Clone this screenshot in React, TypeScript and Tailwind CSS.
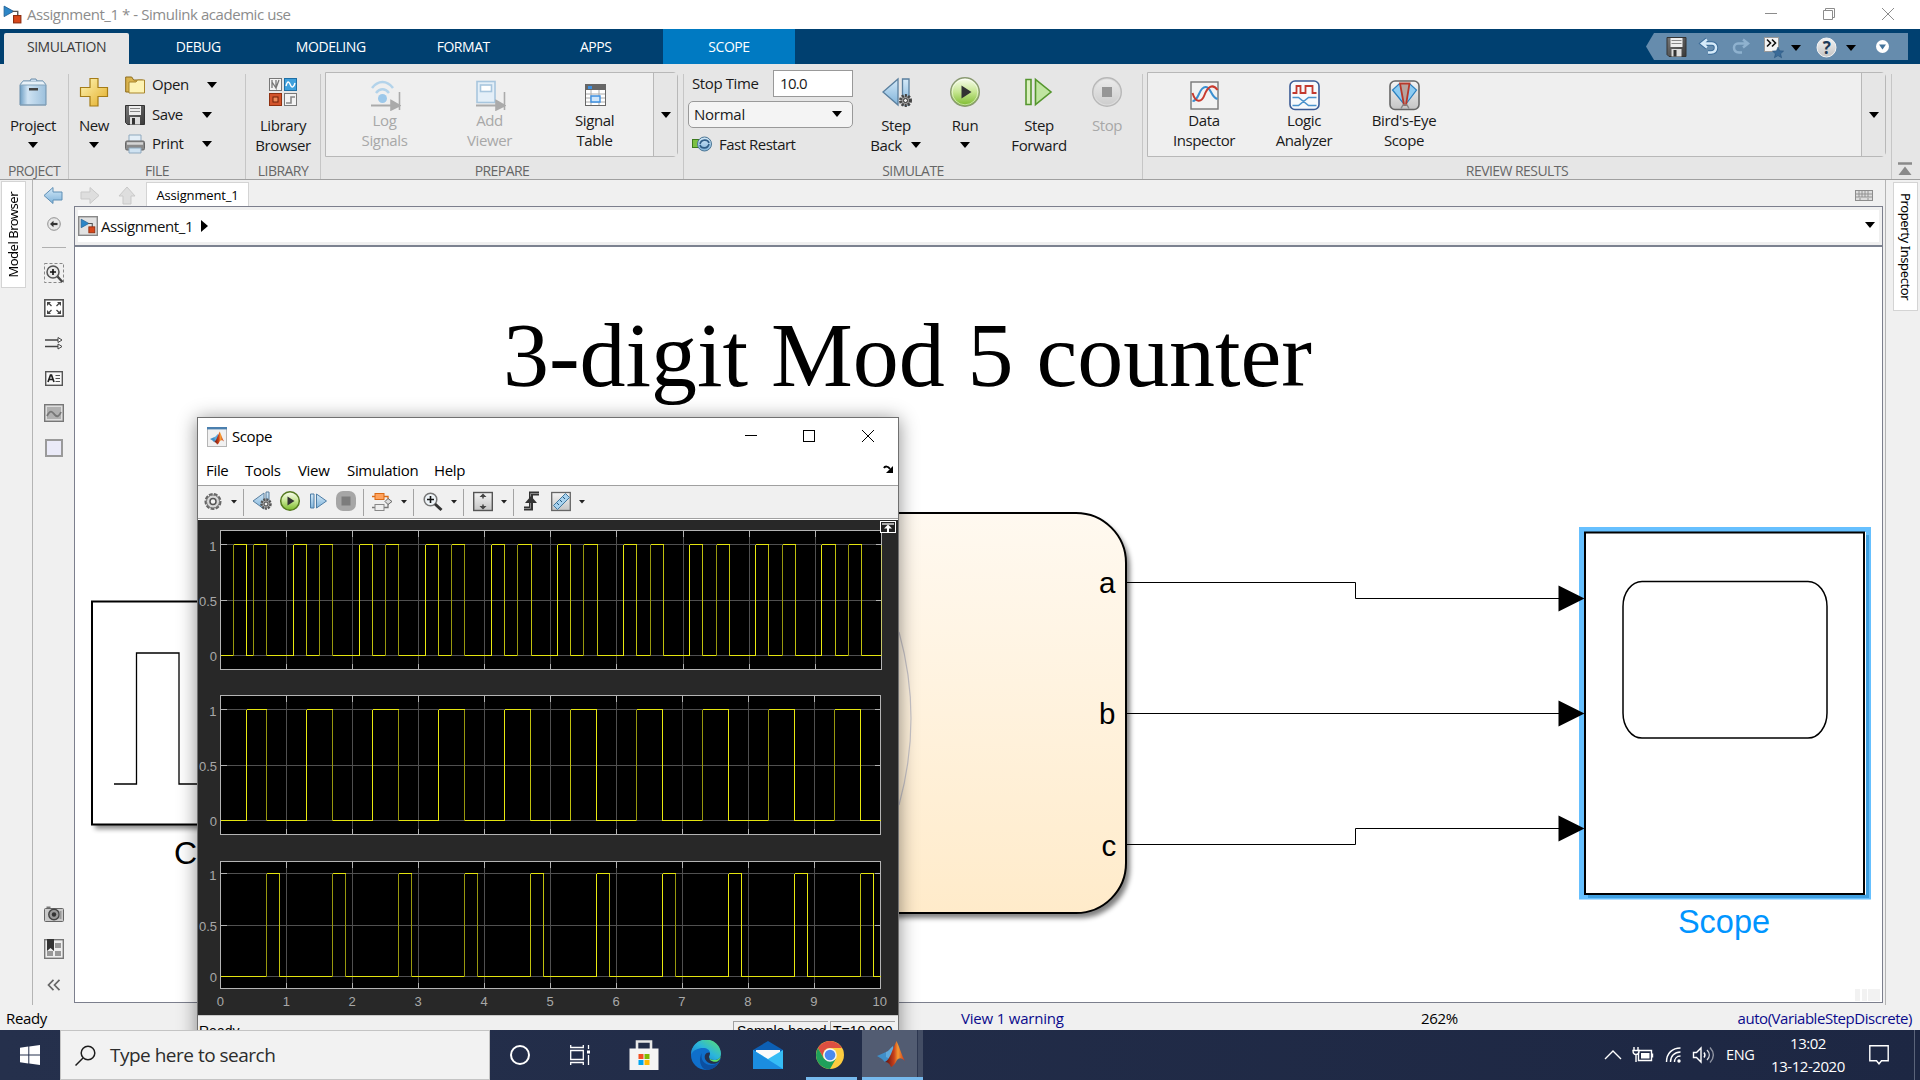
import React from "react";

type Kids = { children?: React.ReactNode };

const ui = "font-['Open_Sans','Noto_Sans',sans-serif]";

/* ---------- small shared glyphs ---------- */

function Caret({ className = "" }: { className?: string }) {
  return (
    <svg width="12" height="6" viewBox="0 0 12 6" className={"shrink-0 " + className}>
      <path d="M1 0h10L6 6z" fill="#000" />
    </svg>
  );
}

function Defs() {
  return (
    <svg width="0" height="0" className="absolute">
      <defs>
        <linearGradient id="blueG" x1="0" y1="0" x2="0" y2="1">
          <stop offset="0" stopColor="#d4e9f8" />
          <stop offset="1" stopColor="#7fb3da" />
        </linearGradient>
        <linearGradient id="blueH" x1="0" y1="0" x2="1" y2="0">
          <stop offset="0" stopColor="#6f9fc4" />
          <stop offset="0.3" stopColor="#cfe3f3" />
          <stop offset="1" stopColor="#9cc0dc" />
        </linearGradient>
        <linearGradient id="greenG" x1="0" y1="0" x2="0" y2="1">
          <stop offset="0" stopColor="#fbfef2" />
          <stop offset="0.5" stopColor="#c6e691" />
          <stop offset="1" stopColor="#79b928" />
        </linearGradient>
        <linearGradient id="grayG" x1="0" y1="0" x2="0" y2="1">
          <stop offset="0" stopColor="#f4f4f4" />
          <stop offset="1" stopColor="#c4c4c4" />
        </linearGradient>
        <linearGradient id="goldG" x1="0" y1="0" x2="1" y2="1">
          <stop offset="0" stopColor="#fff7b8" />
          <stop offset="1" stopColor="#e3ac24" />
        </linearGradient>
        <linearGradient id="darkG" x1="0" y1="0" x2="1" y2="1">
          <stop offset="0" stopColor="#777" />
          <stop offset="1" stopColor="#3a3a3a" />
        </linearGradient>
        <linearGradient id="matlabG" x1="0" y1="0" x2="1" y2="0">
          <stop offset="0" stopColor="#5a1010" />
          <stop offset="0.45" stopColor="#c8401a" />
          <stop offset="0.65" stopColor="#f59a33" />
          <stop offset="1" stopColor="#c8301a" />
        </linearGradient>
        <linearGradient id="chartG" x1="0" y1="0" x2="0" y2="1">
          <stop offset="0" stopColor="#fff9f0" />
          <stop offset="1" stopColor="#ffebca" />
        </linearGradient>
        <linearGradient id="edgeA" x1="0" y1="1" x2="1" y2="0">
          <stop offset="0" stopColor="#1473d0" />
          <stop offset="0.5" stopColor="#2bb5dc" />
          <stop offset="1" stopColor="#5fe36a" />
        </linearGradient>
      </defs>
    </svg>
  );
}

function ModelMark() {
  return (
    <>
      <path d="M2 2l9 5-9 5z" fill="#2c86c7" stroke="#1d5d92" strokeWidth="0.8" />
      <path d="M10 7h5v5" fill="none" stroke="#555" strokeWidth="1.3" />
      <rect x="11" y="11" width="7" height="7" fill="#d8481c" stroke="#8c2a0c" />
    </>
  );
}

function MatlabMark() {
  return (
    <>
      <path d="M1 17l9-4 5 5-6 5-3-3z" fill="#3f8fc9" />
      <path d="M10 13c3-1 4-4 7-6l1 7-4 6-4-2z" fill="#5fa9dc" />
      <path d="M9 23c5-2 7-12 11.500-21 3 6 5 14 8.500 20-4-4-6-3-8-1-2 4-4 6.500-6 7-1-3-3-5-6-5z" fill="url(#matlabG)" />
    </>
  );
}

function SaveArt() {
  return (
    <>
      <path d="M.5.5h19v19h-17l-2-2z" fill="url(#darkG)" stroke="#333" />
      <rect x="4" y="1" width="12" height="9" fill="#eee" />
      <path d="M5 3.500h10M5 6.500h10" stroke="#888" strokeWidth="1.200" />
      <rect x="5" y="12" width="10" height="7.500" fill="#ddd" />
      <rect x="7" y="13" width="3" height="6.500" fill="#333" />
    </>
  );
}

/* ---------- title bar & tabs ---------- */

function TitleBar() {
  return (
    <div className="flex h-[29px] items-center bg-white pl-[2px] text-[15px] tracking-[-0.44px] text-[#8c8c8c]">
      <svg width="21" height="21" viewBox="0 0 20 20">
        <ModelMark />
      </svg>
      <span className="ml-[4px] flex-1">Assignment_1 * - Simulink academic use</span>
      <svg width="160" height="29" viewBox="0 0 160 29" fill="none" stroke="#8c8c8c">
        <path d="M5 13.500h12" />
        <path d="M63.500 10.500h9v9h-9zM65.500 10.500v-2h9v9h-2" />
        <path d="M122 8l12 12M134 8l-12 12" />
      </svg>
    </div>
  );
}

function QuickAccess() {
  return (
    <svg width="262" height="27" viewBox="0 0 262 27" className="mt-1 mr-3">
      <path d="M0 13.500L8 0h254v27H8z" fill="#668cad" />
      <g transform="translate(20.500 4)">
        <SaveArt />
      </g>
      <path d="M61 6.500l-5 4 5 4M57 10.500h9c5 0 6 8-1 9h-3" fill="none" stroke="#3d6d99" strokeWidth="4.500" />
      <path d="M61 6.500l-5 4 5 4M57 10.500h9c5 0 6 8-1 9h-3" fill="none" stroke="#d6ebfa" strokeWidth="2.500" />
      <path d="M97 6.500l5 4-5 4M101 10.500h-9c-5 0-6 8 1 9h3" fill="none" stroke="#8fb2cf" strokeWidth="2.500" />
      <rect x="118.500" y="4.500" width="14" height="14" fill="#f4f4f4" stroke="#999" />
      <path d="M121 6.500l3.500 3.500-3.500 3.500M126 6.500l3.500 3.500-3.500 3.500" fill="none" stroke="#111" strokeWidth="1.600" />
      <path d="M132 14l1.600 3.800 4 .3-3 2.700 1 4-3.600-2.200-3.600 2.200 1-4-3-2.700 4-.3z" fill="#3a6a97" stroke="#254e76" strokeWidth="0.500" />
      <path d="M145 12h10l-5 6z" fill="#000" />
      <circle cx="180.500" cy="14.500" r="9.500" fill="url(#grayG)" stroke="#f5f5f5" />
      <text x="180.500" y="20.500" textAnchor="middle" fontSize="17" fontWeight="700" fill="#1f3b57" fontFamily="Open Sans, sans-serif">
        ?
      </text>
      <path d="M200 12h10l-5 6z" fill="#000" />
      <circle cx="236.500" cy="13.500" r="6.500" fill="#fff" />
      <path d="M233 11.500h7l-3.500 5z" fill="#44749c" />
    </svg>
  );
}

function TabBar() {
  return (
    <div className="flex h-[35px] bg-[#004070] text-[14px] tracking-[-0.45px] text-white">
      <div className="mt-1 ml-1 flex w-[125px] items-center justify-center rounded-t-[2px] bg-[#e6e6e6] pb-[4px] text-[#3a3a3a]">SIMULATION</div>
      <div className="ml-[3px] flex flex-1 pb-[1px] font-medium">
        {["DEBUG", "MODELING", "FORMAT", "APPS"].map((t) => (
          <div key={t} className="flex w-[132.500px] items-center justify-center">
            {t}
          </div>
        ))}
        <div className="-mb-[1px] ml-[1px] flex w-[132px] items-center justify-center bg-[#007ac2] pb-[1px]">SCOPE</div>
      </div>
      <QuickAccess />
    </div>
  );
}

/* ---------- ribbon icons ---------- */

const icons: Record<string, React.ReactNode> = {
  project: (
    <>
      <path d="M3 9l3-4h20l3 4v20H3z" fill="url(#blueH)" stroke="#6d8fab" />
      <path d="M3 9l3-4h20l3 4z" fill="#e8f1f8" stroke="#86a5bd" />
      <path d="M13 5l1-2h5l1 2" fill="#cde" stroke="#6d8fab" />
      <rect x="12" y="12" width="9" height="2.500" fill="#444" />
      <path d="M3 29h26" stroke="#8aa4b9" />
    </>
  ),
  new: <path d="M12 2.500h8v9h9.500v9H20v9.500h-8v-9.500H2.500v-9H12z" fill="url(#goldG)" stroke="#a57c17" strokeWidth="1.200" />,
  library: (
    <>
      <rect x="2.500" y="2.500" width="12" height="12" fill="#f3f3f3" stroke="#777" />
      <path d="M5 4v8M9 4v8l-4-6M12 4l-3 8" stroke="#777" strokeWidth="1.300" fill="none" />
      <rect x="17.500" y="2.500" width="12" height="12" fill="#3da0dc" stroke="#1f6fa5" />
      <path d="M19 10c2-8 4-2 5 0s3 1 4-3" stroke="#fff" strokeWidth="1.400" fill="none" />
      <rect x="2.500" y="17.500" width="12" height="12" fill="#d2542c" stroke="#8f3010" />
      <rect x="6" y="21" width="5" height="5" fill="#f08c5c" stroke="#702008" />
      <rect x="17.500" y="17.500" width="12" height="12" fill="#f3f3f3" stroke="#777" />
      <path d="M19 27h5v-6h4" stroke="#888" strokeWidth="1.600" fill="none" />
    </>
  ),
  log: (
    <g fill="none">
      <path d="M3 9c6-8 15-8 21 0M7 14c4-5 9-5 13 0" stroke="#b3d3ea" strokeWidth="2.500" />
      <circle cx="13.500" cy="19.500" r="4.500" fill="#9cc8ea" />
      <path d="M2 26.500h21" stroke="#aaa" strokeWidth="2" />
      <path d="M22 21.500l9 5-9 4.500zM30.500 13v18" fill="#aaa" stroke="#aaa" strokeWidth="1.600" />
    </g>
  ),
  viewer: (
    <g fill="none">
      <rect x="3" y="2.500" width="18" height="21" fill="#e4eff8" stroke="#a8c6de" strokeWidth="1.600" />
      <rect x="6.500" y="6" width="11" height="6.500" fill="#fff" stroke="#a8c6de" strokeWidth="1.600" />
      <path d="M2 26.500h21" stroke="#aaa" strokeWidth="2" />
      <path d="M22 21.500l9 5-9 4.500zM30.500 13v18" fill="#aaa" stroke="#aaa" strokeWidth="1.600" />
    </g>
  ),
  table: (
    <>
      <rect x="6.500" y="5.500" width="20" height="21" fill="#fff" stroke="#666" />
      <rect x="7" y="6" width="19" height="5" fill="#666" />
      <rect x="9" y="7" width="4" height="3" fill="#3d8fe0" />
      <path d="M7 15h19M7 19h19M7 23h19M12 11v15M20 11v15" stroke="#aaa" fill="none" />
      <path d="M12 17h9v6h-9z" fill="#cfe6fb" stroke="#3d8fe0" strokeWidth="1.400" />
    </>
  ),
  stepBack: (
    <>
      <path d="M18 3v26L3 16z" fill="url(#blueG)" stroke="#5a7f9e" strokeWidth="1.300" />
      <path d="M22.500 3H29v26h-6.500z" fill="url(#blueG)" stroke="#5a7f9e" strokeWidth="1.300" />
      <circle cx="25.500" cy="24.500" r="5" fill="#999" stroke="#444" strokeWidth="3" strokeDasharray="2 1.200" />
      <circle cx="25.500" cy="24.500" r="2" fill="#eee" stroke="#333" />
    </>
  ),
  run: (
    <>
      <circle cx="16" cy="16" r="14.300" fill="url(#greenG)" stroke="#8a9a72" strokeWidth="1.400" />
      <circle cx="16" cy="16" r="12.800" fill="none" stroke="#fff" strokeOpacity="0.500" />
      <path d="M12.500 9.500l10 6.500-10 6.500z" fill="#333" />
    </>
  ),
  stepFwd: (
    <>
      <path d="M3 3.500h5v25H3z" fill="#d9f0bd" stroke="#55962e" strokeWidth="1.600" />
      <path d="M12.500 3.500v25L28 16z" fill="#bfe5a0" stroke="#55962e" strokeWidth="1.600" />
    </>
  ),
  stop: (
    <>
      <circle cx="16" cy="16" r="14.300" fill="#dcdcdc" stroke="#b8b8b8" strokeWidth="1.400" />
      <circle cx="16" cy="16" r="12.500" fill="url(#grayG)" opacity="0.600" />
      <rect x="11" y="11" width="10" height="10" fill="#969696" />
    </>
  ),
  inspector: (
    <>
      <rect x="3" y="3" width="27" height="27" fill="#f2f2f2" stroke="#777" strokeWidth="1.400" />
      <path d="M4.500 22c7 0 6-14 13-14 6 0 5 10 12 12" stroke="#3a8fd0" strokeWidth="2" fill="none" />
      <path d="M4.500 14c3 10 9 10 12 2s8-12 13-5" stroke="#c93a2e" strokeWidth="2" fill="none" />
    </>
  ),
  logic: (
    <>
      <rect x="2" y="2" width="29" height="28.500" rx="5" fill="#f7f9fc" stroke="#3a5a94" strokeWidth="1.600" />
      <path d="M4.500 14h4V7h4v7h5V7h7v7h4" stroke="#c4392e" strokeWidth="1.800" fill="none" />
      <path d="M4.500 18.500h6l10 8h8M4.500 26.500h6l10-8h8" stroke="#4a92cc" strokeWidth="1.600" fill="none" />
    </>
  ),
  birds: (
    <>
      <rect x="2" y="2" width="29" height="28.500" rx="5" fill="url(#grayG)" stroke="#666" strokeWidth="1.600" />
      <path d="M16 25L4.500 11l6.500-6h11l6.500 6L18 25z" fill="#8ccbf2" stroke="#2a7fbe" strokeWidth="1.200" />
      <path d="M16 26L12 4.500h9.500L18 26z" fill="#b7a49f" stroke="#b8382a" strokeWidth="1.800" />
      <path d="M13 29.500l2-3.500h4l2 3.500" stroke="#888" strokeWidth="1.500" fill="none" />
    </>
  ),
};

function Ico({ name }: { name: string }) {
  return (
    <svg width="32" height="32" viewBox="0 0 32 32" className="shrink-0">
      {icons[name]}
    </svg>
  );
}

function BigButton({ icon, l1, l2, caret, w, disabled, gallery }: { icon: string; l1: string; l2?: string; caret?: boolean; w: string; disabled?: boolean; gallery?: boolean }) {
  return (
    <div className={`flex flex-col items-center leading-[20px] ${w} ${gallery ? "pt-[6px]" : "pt-[12px]"} ${disabled ? "text-[#a8a8a8]" : "text-[#1a1a1a]"}`}>
      <Ico name={icon} />
      <span className={gallery ? "-mt-px" : "mt-[7px]"}>{l1}</span>
      <span className="flex h-[20px] items-center gap-[8px]">
        {l2}
        {caret && <Caret />}
      </span>
    </div>
  );
}

function Section({ label, w, children }: Kids & { label: string; w: string }) {
  return (
    <div className={`flex flex-col ${w}`}>
      <div className="flex h-[95px]">{children}</div>
      <div className="flex h-[20px] items-center justify-center pt-[3px] text-[14px] tracking-[-0.55px] text-[#666]">{label}</div>
    </div>
  );
}

const Sep = () => <div className="mt-[10px] w-px bg-[#c6c6c6]" />;

function FileRow({ icon, label, wide }: { icon: React.ReactNode; label: string; wide?: boolean }) {
  return (
    <div className="flex h-[30px] items-center">
      <span className="flex w-[27px]">{icon}</span>
      <span className={wide ? "w-[54px] pb-[2px]" : "w-[49px] pb-[1px]"}>{label}</span>
      <Caret />
    </div>
  );
}

function Ribbon() {
  return (
    <div className="flex h-[116px] border-b border-[#9f9f9f] bg-[#e6e6e6] text-[15px] tracking-[-0.4px] text-[#1a1a1a]">
      <Section label="PROJECT" w="w-[68px]">
        <BigButton icon="project" l1="Project" caret w="w-[66px]" />
      </Section>
      <Sep />
      <Section label="FILE" w="w-[176px]">
        <BigButton icon="new" l1="New" caret w="w-[50px]" />
        <div className="flex flex-col pt-[6px] pl-[6px]">
          <FileRow
            wide
            label="Open"
            icon={
              <svg width="20" height="18" viewBox="0 0 20 18">
                <path d="M.7 16V1h6l2 3h9v12z" fill="#d9b34d" stroke="#8d6c1c" />
                <path d="M4 17V6h7l1.500-2h7v13z" fill="#fdf3b4" stroke="#a8852c" />
              </svg>
            }
          />
          <FileRow
            label="Save"
            icon={
              <svg width="20" height="20" viewBox="0 0 20 20">
                <SaveArt />
              </svg>
            }
          />
          <FileRow
            label="Print"
            icon={
              <svg width="20" height="20" viewBox="0 0 20 20">
                <path d="M4 1h12v7H4z" fill="#e3eef7" stroke="#8fa9be" />
                <rect x="0.500" y="7" width="19" height="9" rx="1.500" fill="#8a8a8a" stroke="#666" />
                <path d="M2 9.500h16" stroke="#d4d4d4" strokeWidth="2.500" />
                <path d="M4 14h12v5H4z" fill="#cfe2f1" stroke="#8fa9be" />
              </svg>
            }
          />
        </div>
      </Section>
      <Sep />
      <Section label="LIBRARY" w="w-[74px]">
        <BigButton icon="library" l1="Library" l2="Browser" w="w-[74px]" />
      </Section>
      <Sep />
      <Section label="PREPARE" w="w-[362px]">
        <div className="mt-[8px] ml-[4px] flex h-[85px] w-[353px] rounded-r-[5px] border border-[#b8b8b8] bg-[#efefef]">
          <div className="flex flex-1 pl-[6px]">
            <BigButton gallery disabled icon="log" l1="Log" l2="Signals" w="w-[105px]" />
            <BigButton gallery disabled icon="viewer" l1="Add" l2="Viewer" w="w-[105px]" />
            <BigButton gallery icon="table" l1="Signal" l2="Table" w="w-[105px]" />
          </div>
          <div className="flex w-[24px] items-center justify-center border-l border-[#b8b8b8] bg-[#e6e6e6]">
            <Caret />
          </div>
        </div>
      </Section>
      <Sep />
      <Section label="SIMULATE" w="w-[458px]">
        <div className="flex w-[169px] flex-col pt-[6px] pl-[4px]">
          <div className="flex h-[27px] items-center">
            <span className="ml-[4px] w-[81px]">Stop Time</span>
            <div className="flex h-[27px] w-[80px] items-center border border-[#999] bg-white pl-[6px] tracking-[-0.7px]">10.0</div>
          </div>
          <div className="mt-[4px] flex h-[28px] w-[165px] items-center justify-between rounded-[5px] border border-[#999] bg-[#f4f4f4] pr-[9px] pb-px pl-[5px]">
            <span className="tracking-[-0.25px]">Normal</span>
            <Caret />
          </div>
          <div className="flex h-[33px] items-center pt-[2px] pl-[4px]">
            <svg width="20" height="16" viewBox="0 0 20 16">
              <rect x="0.500" y="3.500" width="6" height="8" fill="#7cc043" stroke="#3d7a1d" />
              <circle cx="12.500" cy="8" r="7" fill="url(#blueG)" stroke="#4b7594" />
              <path d="M8 8c1-5 8-5 9-1M17 8c-1 5-8 5-9 1" stroke="#2f5d86" strokeWidth="1.600" fill="none" />
            </svg>
            <span className="ml-[7px] tracking-[-0.5px]">Fast Restart</span>
          </div>
        </div>
        <BigButton icon="stepBack" l1="Step" l2="Back" caret w="w-[86px]" />
        <BigButton icon="run" l1="Run" caret w="w-[52px]" />
        <BigButton icon="stepFwd" l1="Step" l2="Forward" w="w-[96px]" />
        <BigButton icon="stop" l1="Stop" disabled w="w-[40px]" />
      </Section>
      <Sep />
      <Section label="REVIEW RESULTS" w="w-[748px]">
        <div className="mt-[8px] ml-[4px] flex h-[85px] w-[739px] rounded-r-[5px] border border-[#b8b8b8] bg-[#efefef]">
          <div className="flex flex-1 pl-[6px]">
            <BigButton gallery icon="inspector" l1="Data" l2="Inspector" w="w-[100px]" />
            <BigButton gallery icon="logic" l1="Logic" l2="Analyzer" w="w-[100px]" />
            <BigButton gallery icon="birds" l1="Bird's-Eye" l2="Scope" w="w-[100px]" />
          </div>
          <div className="flex w-[24px] items-center justify-center border-l border-[#b8b8b8] bg-[#e6e6e6]">
            <Caret />
          </div>
        </div>
      </Section>
      <Sep />
      <svg width="14" height="14" viewBox="0 0 14 14" className="mt-[98px] ml-[6px]">
        <path d="M0 1.500h14" stroke="#8a8a8a" strokeWidth="2.500" />
        <path d="M7 4.500l6.500 8.500H.5z" fill="#8a8a8a" />
      </svg>
    </div>
  );
}

/* ---------- palette on the left of the canvas ---------- */

function Palette() {
  return (
    <div className="flex w-[41px] flex-col items-center">
      <svg width="16" height="16" viewBox="0 0 16 16" className="mt-[10px]">
        <circle cx="8" cy="8" r="6.300" fill="#e8e8e8" stroke="#909090" />
        <path d="M11.500 8H6" stroke="#333" strokeWidth="2.200" />
        <path d="M7.500 4.800L4 8l3.500 3.200z" fill="#333" />
      </svg>
      <div className="mt-[15px] h-px w-[24px] bg-[#b0b0b0]" />
      <svg width="20" height="20" viewBox="0 0 20 20" className="mt-[15px]">
        <rect x="0.500" y="0.500" width="19" height="19" fill="none" stroke="#888" strokeDasharray="3 2" />
        <circle cx="9" cy="9" r="6" fill="#e8e8e8" stroke="#555" strokeWidth="1.500" />
        <path d="M9 6v6M6 9h6" stroke="#111" strokeWidth="1.600" />
        <path d="M13.500 13.500L18.500 19" stroke="#444" strokeWidth="2.400" />
      </svg>
      <svg width="20" height="18" viewBox="0 0 20 18" className="mt-[16px]">
        <rect x="0.800" y="0.800" width="18.400" height="16.400" fill="#fff" stroke="#555" strokeWidth="1.600" />
        <path d="M7.500 7L4 3.500M12.500 7L16 3.500M7.500 11L4 14.500M12.500 11l3.500 3.500" stroke="#444" strokeWidth="1.300" />
        <path d="M3 3h4L3 7zM17 3h-4l4 4zM3 15h4l-4-4zM17 15h-4l4-4z" fill="#444" />
      </svg>
      <svg width="18" height="14" viewBox="0 0 18 14" className="mt-[19px]">
        <path d="M0 4h14M0 10.500h14" stroke="#444" strokeWidth="1.500" />
        <path d="M13 1.500L17 4l-4 2.500zM13 8l4 2.500-4 2.500z" fill="#fff" stroke="#444" />
      </svg>
      <svg width="18" height="15" viewBox="0 0 18 15" className="mt-[21px]">
        <rect x="0.700" y="0.700" width="16.600" height="13.600" fill="#fafafa" stroke="#555" strokeWidth="1.400" />
        <path d="M3 11l2.500-7h1L9 11M4 8.500h4" stroke="#222" strokeWidth="1.700" fill="none" />
        <path d="M10.500 4.500H15M10.500 7.500H15M10.500 10.500H15" stroke="#555" strokeWidth="1.200" />
      </svg>
      <svg width="20" height="18" viewBox="0 0 20 18" className="mt-[18px]">
        <rect x="0.700" y="0.700" width="18.600" height="16.600" fill="#ddd" stroke="#777" strokeWidth="1.400" />
        <rect x="3" y="3" width="14" height="12" fill="#b0b0b0" />
        <path d="M3 12c4-8 6-3 8-1s4 2 6-3" stroke="#777" strokeWidth="1.800" fill="none" />
      </svg>
      <div className="mt-[17px] h-[18px] w-[18px] border-2 border-[#9a9a9a] bg-[#eaeaf8]" />
      <svg width="20" height="16" viewBox="0 0 20 16" className="mt-[449px]">
        <path d="M2.500.5h4v2h-4z" fill="#777" />
        <rect x="0.500" y="2.500" width="19" height="13" rx="1" fill="#c9c9c9" stroke="#666" />
        <circle cx="10" cy="8.500" r="5.200" fill="#999" stroke="#444" strokeWidth="1.500" />
        <circle cx="10" cy="8.500" r="2.200" fill="#333" />
        <rect x="15.500" y="5" width="2" height="8" fill="#999" />
      </svg>
      <svg width="20" height="20" viewBox="0 0 20 20" className="mt-[17px]">
        <rect x="0.700" y="0.700" width="18.600" height="18.600" fill="#eee" stroke="#777" strokeWidth="1.400" />
        <path d="M11 4h6v5h-6zM11 12h6v5h-6zM3 12h6v5H3z" fill="#999" />
        <path d="M3 0h7v12l-3.500-3L3 12z" fill="#333" />
      </svg>
      <svg width="14" height="12" viewBox="0 0 14 12" className="mt-[20px]" fill="none" stroke="#666" strokeWidth="1.700">
        <path d="M6.500.8L1.500 6l5 5.200M12.500.8L7.500 6l5 5.200" />
      </svg>
    </div>
  );
}

/* ---------- block diagram ---------- */

function Diagram() {
  return (
    <svg width="1807" height="755" viewBox="75 247 1807 755" className="block bg-white">
      <defs>
        <filter id="soft" x="-10%" y="-10%" width="130%" height="130%">
          <feGaussianBlur stdDeviation="2.500" />
        </filter>
      </defs>
      <text x="503" y="386" fontSize="92" fontFamily="Liberation Serif, Times New Roman, serif" textLength="809">
        3-digit Mod 5 counter
      </text>

      <rect x="95" y="606" width="200" height="223" fill="#000" opacity="0.450" filter="url(#soft)" />
      <rect x="92" y="601.500" width="200" height="223" fill="#fff" stroke="#000" strokeWidth="2" />
      <path d="M114 784h22.500V653H179v131h20" fill="none" stroke="#000" strokeWidth="1.300" />
      <text x="174" y="864" fontSize="32" fontFamily="Liberation Sans, Arial, sans-serif">
        Clock
      </text>

      <rect x="504" y="518" width="626" height="400" rx="50" fill="#000" opacity="0.500" filter="url(#soft)" />
      <rect x="500" y="513" width="626" height="400" rx="50" fill="url(#chartG)" stroke="#000" strokeWidth="2" />
      <path d="M899 632Q923 718 899 805" fill="none" stroke="#c8c4c8" strokeWidth="1.200" />
      <g fontSize="29.500" fontFamily="Liberation Sans, Arial, sans-serif">
        <text x="1099" y="593">a</text>
        <text x="1099" y="723.500">b</text>
        <text x="1101.500" y="855.500">c</text>
      </g>
      <path d="M1127 582.500h228.500v16H1560M1127 713.500h433M1127 844.500h228.500v-16H1560" fill="none" stroke="#000" strokeWidth="1" />

      <rect x="1581.500" y="529.500" width="287" height="367.500" fill="#fff" stroke="#66c0ff" strokeWidth="5" />
      <path d="M1867.500 535v361.500H1588" fill="none" stroke="#3f9fe0" strokeWidth="3" />
      <rect x="1585" y="532.500" width="279" height="361.500" fill="#fff" stroke="#000" strokeWidth="2" />
      <rect x="1623" y="581.500" width="204" height="156.500" rx="19" ry="25" fill="#fff" stroke="#000" strokeWidth="1.500" />
      <path d="M1558.500 585.500l26 13-26 13zM1558.500 700.500l26 13-26 13zM1558.500 815.500l26 13-26 13z" fill="#000" />
      <text x="1724" y="933" fontSize="32.500" textAnchor="middle" fill="#0095ff" fontFamily="Liberation Sans, Arial, sans-serif">
        Scope
      </text>
      <path d="M1855 989h5v12h-5zM1862 989h5v12h-5zM1868 989h12v12h-12z" fill="#f2f2f2" />
    </svg>
  );
}

/* ---------- editor area ---------- */

function Editor() {
  return (
    <div className="flex h-[825px]">
      <div className="w-[33px] shrink-0 border-r border-[#b4b4b4]">
        <div className="mt-[1px] ml-[1px] flex h-[107px] w-[25px] items-center justify-center border border-[#d4d4d4] bg-white">
          <span className="rotate-180 font-['Noto_Sans',sans-serif] text-[13px] tracking-[-0.5px] whitespace-nowrap text-black [writing-mode:vertical-rl]">Model Browser</span>
        </div>
      </div>
      <div className="flex w-[1853px] flex-col border-r border-[#b4b4b4]">
        <div className="flex h-[26px] shrink-0">
          <svg width="113" height="26" viewBox="0 0 113 26">
            <path d="M11 15.500l9-8V12h9v8h-9v3.500z" fill="url(#blueG)" stroke="#5f8fb5" />
            <path d="M66 15.500l-9-8V12h-9v7h9v4.500z" fill="#dedede" stroke="#c9c9c9" />
            <path d="M94 7l8 9h-4v8h-8v-8h-4z" fill="#dedede" stroke="#c9c9c9" />
          </svg>
          <div className="mt-[2px] flex h-[24px] w-[103px] items-center justify-center border-x border-t border-[#d4d4d4] bg-white pt-[2px] text-[13px] tracking-[-0.15px] text-black">Assignment_1</div>
          <div className="flex-1" />
          <svg width="18" height="11" viewBox="0 0 18 11" className="mt-[10px] mr-[12px]">
            <rect x="0.500" y="0.500" width="17" height="10" fill="#ddd" stroke="#8d8d8d" />
            <path d="M1 4h16M1 7h16M4 1v6M7 1v6M10 1v6M13 1v6M5 8v2M13 8v2" stroke="#8d8d8d" strokeWidth="0.900" />
          </svg>
        </div>
        <div className="flex flex-1">
          <Palette />
          <div className="flex h-[797px] w-[1809px] flex-col border border-[#7c7f8d] bg-white">
            <div className="flex h-[38px] shrink-0 items-center border-3 border-[#f0f0f0] text-[15px] tracking-[-0.4px] text-[#111]">
              <svg width="20" height="20" viewBox="0 0 20 20">
                <rect x="0.700" y="0.700" width="18.600" height="18.600" fill="#e2e2e2" stroke="#888" strokeWidth="1.400" />
                <g transform="translate(1.500 1.500) scale(.85)">
                  <ModelMark />
                </g>
              </svg>
              <span className="ml-[3px] w-[100px]">Assignment_1</span>
              <svg width="7" height="12" viewBox="0 0 7 12">
                <path d="M0 0l7 6-7 6z" />
              </svg>
              <span className="flex-1" />
              <Caret className="mr-[3px] mb-[3px]" />
            </div>
            <div className="h-[2px] shrink-0 bg-[#7c8290]" />
            <Diagram />
          </div>
        </div>
      </div>
      <div className="flex-1 pl-[7px]">
        <div className="mt-[2px] flex h-[129px] w-[25px] items-center justify-center border border-[#d4d4d4] bg-white">
          <span className="font-['Noto_Sans',sans-serif] text-[13px] tracking-[-0.4px] whitespace-nowrap text-black [writing-mode:vertical-rl]">Property Inspector</span>
        </div>
      </div>
    </div>
  );
}

function StatusBar() {
  return (
    <div className="flex h-[25px] items-center pt-[2px] text-[15px] tracking-[-0.35px] text-black">
      <span className="w-[955px] pl-[6px]">Ready</span>
      <span className="w-[466px] pl-[6px] tracking-[-0.2px] text-[#0a0a8c]">View 1 warning</span>
      <span className="flex-1">262%</span>
      <span className="pr-[8px] tracking-[-0.45px] text-[#0a0a8c]">auto(VariableStepDiscrete)</span>
    </div>
  );
}

/* ---------- scope window ---------- */

type Plot = { top: number; bottom: number; hi: number; mid: number; lo: number; w: number; pulses: [number, number][]; endHigh?: boolean };

const tens = Array.from({ length: 10 }, (_, n) => n);

const plots: Plot[] = [
  {
    top: 530.5, bottom: 669.5, hi: 544.5, mid: 600.5, lo: 655.5, w: 661,
    pulses: tens.flatMap((n) => [[n === 0 ? 0.2 : n + 0.1, n === 0 ? 0.4 : n + 0.3], [n + 0.5, n + 0.7]] as [number, number][]),
    endHigh: true,
  },
  { top: 695.5, bottom: 834.5, hi: 709.5, mid: 765.5, lo: 820.5, w: 660, pulses: tens.map((n) => [n === 0 ? 0.4 : n + 0.3, n + 0.7] as [number, number]) },
  { top: 861.5, bottom: 988.5, hi: 873.5, mid: 925.5, lo: 976.5, w: 660, pulses: tens.map((n) => [n + 0.7, n + 0.9] as [number, number]) },
];

/* edge colours [rising, falling] per pulse */
const DIM = "#98980e";
const MID = "#c0c00e";
const LIT = "#e8e810";
const edges: [string, string][][] = [
  tens.flatMap((n) => [[n === 0 ? DIM : LIT, n === 0 ? LIT : MID], [DIM, n < 4 ? DIM : MID]] as [string, string][]),
  tens.map((n) => [n < 5 ? LIT : n < 6 ? MID : DIM, n < 4 ? DIM : n < 5 ? MID : LIT] as [string, string]),
  tens.map((n) => [n < 4 ? DIM : n < 5 ? MID : n < 9 ? LIT : MID, n === 0 ? MID : n < 4 ? DIM : n < 6 ? MID : n < 7 ? DIM : LIT] as [string, string]),
];

function ScopePlot({ p, colors }: { p: Plot; colors: [string, string][] }) {
  const x = (t: number) => 220.5 + Math.round((t * p.w) / 10 - 0.15);
  const end = 220.5 + p.w;
  const ticks = tens.slice(1).map((n) => x(n));
  let last = 220.5;
  const levels: string[] = [];
  p.pulses.forEach(([a, b]) => {
    levels.push(`M${last} ${p.lo}H${x(a)}`);
    levels.push(`M${x(a)} ${p.hi}H${x(b)}`);
    last = x(b);
  });
  levels.push(`M${last} ${p.lo}H${end}`);
  return (
    <g fill="none" shapeRendering="crispEdges">
      <rect x="220.500" y={p.top} width={p.w} height={p.bottom - p.top} fill="#000" />
      <path d={ticks.map((t) => `M${t} ${p.top}V${p.bottom}`).join("") + [p.hi, p.mid, p.lo].map((y) => `M220.500 ${y}H${end}`).join("")} stroke="#505050" />
      <path d={ticks.map((t) => `M${t} ${p.top}v6M${t} ${p.bottom}v-6`).join("") + [p.hi, p.mid, p.lo].map((y) => `M220.500 ${y}h6M${end} ${y}h-6`).join("")} stroke="#b4b4b4" />
      <rect x="220.500" y={p.top} width={p.w} height={p.bottom - p.top} stroke="#b4b4b4" />
      <path d={levels.join("")} stroke="#e4e410" />
      {p.pulses.map(([a, b], i) => (
        <g key={i}>
          <path d={`M${x(a)} ${p.lo}V${p.hi}`} stroke={colors[i][0]} />
          <path d={`M${x(b)} ${p.hi}V${p.lo}`} stroke={colors[i][1]} />
        </g>
      ))}
      {p.endHigh && <path d={`M${end} ${p.lo}V${p.hi}`} stroke="#c8c86a" />}
      <g fill="#a8a8a8" fontSize="13" textAnchor="end" fontFamily="Liberation Sans, Arial, sans-serif">
        <text x="216.500" y={p.hi + 6.5}>1</text>
        <text x="217" y={p.mid + 5.5}>0.5</text>
        <text x="217" y={p.lo + 5.5}>0</text>
      </g>
    </g>
  );
}

function ScopeWindow() {
  return (
    <div className="absolute top-[417px] left-[197px] z-10 flex h-[640px] w-[702px] flex-col border border-[#707070] bg-white text-black shadow-[0_2px_18px_rgba(0,0,0,0.45)]">
      <div className="flex h-[38px] items-center pl-[9px] text-[15px] tracking-[-0.4px]">
        <svg width="20" height="20" viewBox="0 0 20 20" className="-mt-px">
          <rect x="0.500" y="0.500" width="19" height="19" fill="#f1f1f1" stroke="#b5b5b5" />
          <path d="M0 1.200h20" stroke="#4a7fae" strokeWidth="2.400" />
          <g transform="translate(2.500 3.500) scale(.5)">
            <MatlabMark />
          </g>
        </svg>
        <span className="ml-[5px] flex-1 pb-[2px]">Scope</span>
        <svg width="166" height="38" viewBox="0 0 166 38" fill="none" stroke="#000">
          <path d="M13 17.500h12M71.500 12.500h11v11h-11z" shapeRendering="crispEdges" />
          <path d="M130 12l12 12M142 12l-12 12" />
        </svg>
      </div>
      <div className="flex h-[29px] items-center pl-[8px] text-[15px] tracking-[-0.32px]">
        <span className="w-[39px]">File</span>
        <span className="w-[53px]">Tools</span>
        <span className="w-[49px]">View</span>
        <span className="w-[87px]">Simulation</span>
        <span className="flex-1">Help</span>
        <svg width="11" height="9" viewBox="0 0 11 9" className="mr-[4px] mb-[2px]">
          <path d="M1 3c1-2 4-2 6 1" stroke="#000" strokeWidth="2" fill="none" />
          <path d="M10 1v7H3z" fill="#000" />
        </svg>
      </div>
      <div className="flex h-[34px] items-start border-y border-[#a0a0a0] bg-[#f0f0f0]">
        <svg width="400" height="32" viewBox="198 486 400 32">
          <circle cx="213" cy="501.500" r="7" fill="#d5d5d5" stroke="#666" strokeWidth="3" strokeDasharray="3.600 1.200" />
          <circle cx="213" cy="501.500" r="6.500" fill="#d8d8d8" stroke="#777" />
          <circle cx="213" cy="501.500" r="3" fill="#f4f4f4" stroke="#555" strokeWidth="1.500" />
          <path d="M264 493v16l-11-8zM266 492h3v11h-3z" fill="url(#blueG)" stroke="#5a7f9e" />
          <circle cx="266" cy="504" r="4.500" fill="#aaa" stroke="#555" strokeWidth="2.500" strokeDasharray="2 1" />
          <circle cx="266" cy="504" r="2" fill="#eee" stroke="#444" />
          <circle cx="290" cy="501" r="9.300" fill="url(#greenG)" stroke="#557a20" strokeWidth="1.500" />
          <path d="M287.500 496.500l7 4.500-7 4.500z" fill="#333" />
          <path d="M310.500 494h3.500v14h-3.500zM316.500 494v14l10-7z" fill="url(#blueG)" stroke="#4d7da5" />
          <rect x="336" y="491" width="20" height="20" rx="7" fill="#a6a6a6" />
          <rect x="341.500" y="496.500" width="9" height="9" fill="#7c7c7c" />
          <rect x="375" y="493.500" width="9" height="6" fill="#ffa25c" stroke="#d96a16" />
          <path d="M372 496.500h3M384 496.500h4v4" stroke="#d96a16" fill="none" strokeWidth="1.300" />
          <path d="M372 507.500h3M384 507.500h4v-4" stroke="#777" fill="none" strokeWidth="1.300" />
          <rect x="375" y="504.500" width="9" height="6" fill="#eee" stroke="#888" />
          <path d="M385 501.500l3-3 4 3-4 3z" fill="#ddd" stroke="#666" />
          <circle cx="430.500" cy="499.500" r="6.300" fill="#eef4f8" stroke="#777" strokeWidth="1.500" />
          <path d="M430.500 496v7M427 499.500h7" stroke="#111" strokeWidth="1.600" />
          <path d="M435 504l6.500 6" stroke="#333" strokeWidth="3" />
          <rect x="473.700" y="492.500" width="18.600" height="18" fill="url(#grayG)" stroke="#555" strokeWidth="1.400" />
          <path d="M483 493.500l3.500 3.500h-7zM483 509.500l3.500-3.500h-7z" fill="#444" />
          <path d="M483 496v2.500M483 507v-2.500" stroke="#444" strokeWidth="1.500" />
          <path d="M524 508.500h7v-15h8" stroke="#333" strokeWidth="4" fill="none" />
          <path d="M524 508.500h6.500v-15h8.500" stroke="#888" strokeWidth="1" fill="none" />
          <path d="M531 496l6 7h-12z" fill="#333" />
          <rect x="551.700" y="492.500" width="18.600" height="18" fill="url(#grayG)" stroke="#666" strokeWidth="1.300" />
          <path d="M553.500 505.500l12-12 4 4-12 12z" fill="#a9d2ee" stroke="#41799f" />
          <path d="M557 503l2 2M560 500l2 2M563 497l2 2" stroke="#27587c" />
          <path d="M243.500 489v27M363.500 489v27M413.500 489v27M463.500 489v27M513.500 489v27" stroke="#a3a3a3" />
          <g fill="#222">
            {[234, 404, 454, 504, 582].map((cx) => (
              <path key={cx} d={`M${cx - 3} 500h6l-3 3.500z`} />
            ))}
          </g>
        </svg>
      </div>
      <div className="h-px shrink-0 bg-white" />
      <svg width="700" height="495" viewBox="198 520 700 495" className="block shrink-0 bg-[#282828]">
        {plots.map((p, i) => (
          <ScopePlot key={i} p={p} colors={edges[i]} />
        ))}
        <g fill="#a8a8a8" fontSize="13" textAnchor="middle" fontFamily="Liberation Sans, Arial, sans-serif">
          {Array.from({ length: 11 }, (_, n) => (
            <text key={n} x={220.3 + n * 65.95} y="1006">
              {n}
            </text>
          ))}
        </g>
        <rect x="880.500" y="521.500" width="15" height="11" fill="#222" stroke="#fff" />
        <path d="M882 524h12" stroke="#aaa" strokeWidth="2" />
        <path d="M888 524.500l4 4h-3v4h-2v-4h-3z" fill="#fff" />
      </svg>
      <div className="flex flex-1 items-start border-t border-[#c8c8c8] bg-[#f0f0f0] pt-[5px] font-['Liberation_Sans',sans-serif] text-[14px] leading-[17px]">
        <span className="flex-1 pt-[2px] pl-[1px]">Ready</span>
        <span className="h-[30px] w-[95px] border-t border-l border-[#a0a0a0] pt-[1px] pl-[3px] whitespace-nowrap">Sample based</span>
        <span className="mr-[3px] ml-[2px] h-[30px] w-[65px] border-t border-l border-[#a0a0a0] pt-[1px] pl-[2px]">T=10.000</span>
      </div>
    </div>
  );
}

/* ---------- taskbar ---------- */

function AppCell({ w, children }: Kids & { w: string }) {
  return <div className={`flex h-[50px] items-center justify-center ${w}`}>{children}</div>;
}

function Taskbar() {
  return (
    <div className="relative z-20 flex h-[50px] bg-gradient-to-r from-[#25304c] to-[#1d2743] text-white">
      <AppCell w="w-[60px]">
        <svg width="20" height="20" viewBox="0 0 20 20" fill="#fff">
          <path d="M0 2.800L8.300 1.600v8H0zM9.300 1.500L20 0v9.600H9.300zM0 10.500h8.300v8L0 17.300zM9.300 10.500H20V20L9.300 18.500z" />
        </svg>
      </AppCell>
      <div className="flex h-[50px] w-[430px] items-center border border-[#c4c4c4] bg-[#f2f2f2] pl-[14px] text-[19px] tracking-[-0.5px] text-[#2c2c2c]">
        <svg width="21" height="21" viewBox="0 0 21 21" fill="none" stroke="#1c1c1c" strokeWidth="1.500">
          <circle cx="13" cy="8" r="6.800" />
          <path d="M8 13L.5 20.500" />
        </svg>
        <span className="ml-[14px]">Type here to search</span>
      </div>
      <AppCell w="w-[60px]">
        <div className="h-[20px] w-[20px] rounded-full border-[2.500px] border-white" />
      </AppCell>
      <AppCell w="w-[60px]">
        <svg width="20" height="20" viewBox="0 0 20 20" fill="none" stroke="#fff" strokeWidth="1.300">
          <path d="M.7 5.500h12.600v9H.7zM.7 0v2.500h12.600V0M.7 20v-2.500h12.600V20M18.500 0v4M18.500 10v10" />
          <rect x="17" y="5.500" width="3" height="3" fill="#fff" stroke="none" />
        </svg>
      </AppCell>
      <AppCell w="w-[67px]">
        <svg width="30" height="30" viewBox="0 0 30 30">
          <path d="M8 9V1.500h14V9" fill="none" stroke="#e8e8e8" strokeWidth="2.600" />
          <path d="M.5 8.500h29V30H.5z" fill="#f4f4f4" />
          <path d="M9.500 14h5v5h-5z" fill="#f25022" />
          <path d="M15.500 14h5v5h-5z" fill="#7fba00" />
          <path d="M9.500 20h5v5h-5z" fill="#00a4ef" />
          <path d="M15.500 20h5v5h-5z" fill="#ffb900" />
        </svg>
      </AppCell>
      <AppCell w="w-[58px]">
        <svg width="30" height="30" viewBox="0 0 30 30">
          <circle cx="15" cy="15" r="15" fill="#0f6fcb" />
          <path d="M0 15A15 15 0 0 1 30 14c0 4-3 6-7 6-3 0-5-1-5-3 0-1 1-2 1-4 0-3-3-5-7-5C7 8 2 10 0 15z" fill="url(#edgeA)" />
          <path d="M11 13c-2 6 2 12 9 12 3 0 6-1 8-3A15 15 0 0 1 16 30C9 29 7 18 11 13z" fill="#0c4fa0" />
          <path d="M18 17c0 2 2 3 5 3 4 0 7-2 7-6v3l-2 5c-8 5-16-1-14-7 1-3 5-3 5-2s-1 3-1 4z" fill="#25304c" />
          <path d="M18 17c0 2 2 3 5 3 4 0 7-2 7-6 0 9-7 9-11 6z" fill="#5fe36a" />
        </svg>
      </AppCell>
      <AppCell w="w-[66px]">
        <svg width="30" height="30" viewBox="0 0 30 30">
          <path d="M0 10L15 1l15 9v3H0z" fill="#0c5fb4" />
          <path d="M3 10h24v10H3z" fill="#fafafa" />
          <path d="M0 10l15 9L30 10v19H0z" fill="#36bdf5" />
          <path d="M0 10l30 19H0z" fill="#1b8de0" />
        </svg>
      </AppCell>
      <div className="flex w-[61px] flex-col items-center">
        <div className="flex h-[47px] items-center pt-[3px] pr-[3px]">
          <svg width="28" height="28" viewBox="0 0 28 28">
            <circle cx="14" cy="14" r="14" fill="#fdcc3f" />
            <path d="M1.900 7A14 14 0 0 1 26.100 7H14a7 7 0 0 0-6.100 10.500z" fill="#dd4f41" />
            <path d="M7.900 17.500L1.900 7A14 14 0 0 0 14 28l6-10.500z" fill="#1fa05b" />
            <circle cx="14" cy="14" r="6.800" fill="#f3f3f3" />
            <circle cx="14" cy="14" r="5.300" fill="#4a8af0" />
          </svg>
        </div>
        <div className="h-[3px] w-[51px] bg-[#76b9ed]" />
      </div>
      <div className="flex w-[61px] flex-col">
        <div className="flex h-[47px]">
          <div className="flex w-[56px] items-center justify-center border-r border-[#2c3650] bg-[#525c72]">
            <svg width="30" height="30" viewBox="0 0 30 30" className="mt-[1px] ml-[3px]">
              <MatlabMark />
            </svg>
          </div>
          <div className="w-[5px] bg-[#434d64]" />
        </div>
        <div className="h-[3px] bg-[#76b9ed]" />
      </div>
      <div className="flex-1" />
      <svg width="112" height="50" viewBox="1602 1030 112 50" fill="none" stroke="#fff" strokeWidth="1.400">
        <path d="M1604 1059l8-8 8 8" />
        <path d="M1637.500 1050.500h13v10h-13zM1651.500 1053.500v4" />
        <path d="M1640 1053h8.500v5.500h-8.500z" fill="#fff" stroke="none" />
        <path d="M1633 1047v3M1637 1047v3M1632 1050.500h6c0 4-2 4-3 4s-3 0-3-4zM1635 1054v8" fill="#1f2945" />
        <path d="M1665.500 1062c0-9 6-14 14-14M1669.500 1062c0-6 4-10 10-10M1673.500 1062c0-3 2-6 6-6" />
        <circle cx="1678" cy="1061" r="1.700" fill="#fff" stroke="none" />
        <path d="M1692.500 1052.500h3l4.500-4.500v14l-4.500-4.500h-3zM1703 1052.500c1.500 2 1.500 3 0 5" />
        <path d="M1706 1050c3 3 3 7 0 10" opacity="0.800" />
        <path d="M1709 1047.500c4.500 5 4.500 10 0 15" opacity="0.500" />
      </svg>
      <span className="ml-[11px] w-[30px] self-center text-[14.500px] tracking-[-0.4px]">ENG</span>
      <div className="ml-[6px] flex w-[92px] flex-col items-center pt-[2px] text-[15px] leading-[23px] tracking-[-0.45px]">
        <span>13:02</span>
        <span>13-12-2020</span>
      </div>
      <svg width="20" height="20" viewBox="0 0 20 20" className="mt-[15px] ml-[15px]" fill="none" stroke="#fff" strokeWidth="1.400">
        <path d="M.8.8h18.400v15H12.500L10 18.800l-2.500-3H.8z" />
      </svg>
      <div className="mr-[5px] ml-[25px] w-px bg-[#5b647a]" />
    </div>
  );
}

export default function App() {
  return (
    <div className={`relative h-[1080px] w-[1920px] overflow-hidden bg-[#f0f0f0] whitespace-nowrap ${ui}`}>
      <Defs />
      <TitleBar />
      <TabBar />
      <Ribbon />
      <Editor />
      <StatusBar />
      <ScopeWindow />
      <Taskbar />
    </div>
  );
}
